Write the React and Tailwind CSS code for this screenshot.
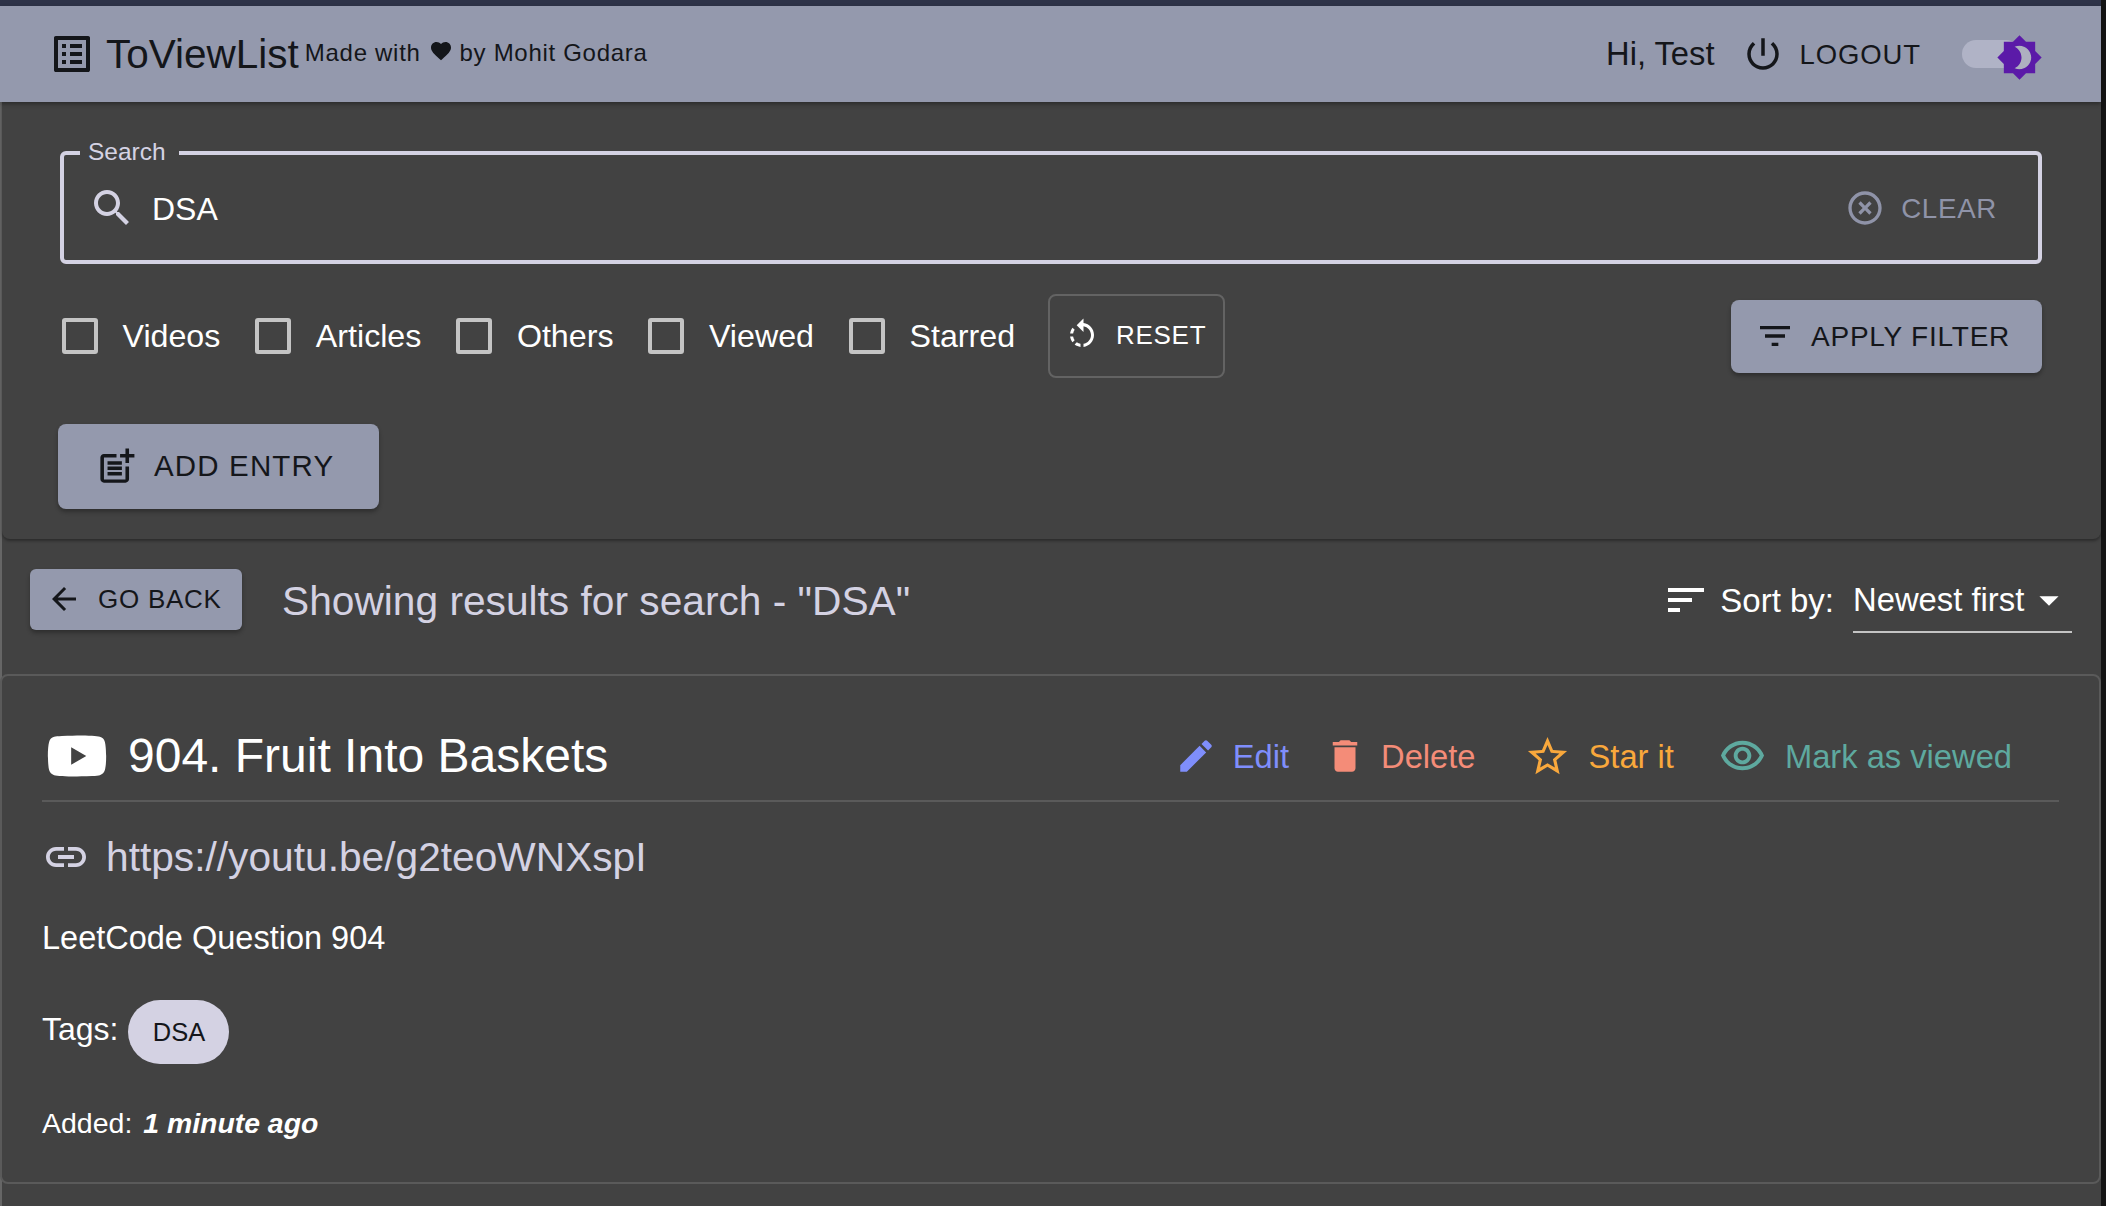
const paths = {
  list: 'M19 5v14H5V5h14m1.1-2H3.9c-.5 0-.9.4-.9.9v16.2c0 .4.4.9.9.9h16.2c.4 0 .9-.5.9-.9V3.9c0-.5-.5-.9-.9-.9zM11 7h6v2h-6V7zm0 4h6v2h-6v-2zm0 4h6v2h-6zM7 7h2v2H7zm0 4h2v2H7zm0 4h2v2H7z',
  heart: 'M12 21.35l-1.45-1.32C5.4 15.36 2 12.28 2 8.5 2 5.42 4.42 3 7.5 3c1.74 0 3.41.81 4.5 2.09C13.09 3.81 14.76 3 16.5 3 19.58 3 22 5.42 22 8.5c0 3.78-3.4 6.86-8.55 11.54L12 21.35z',
  power: 'M13 3h-2v10h2V3zm4.83 2.17l-1.42 1.42C17.99 7.86 19 9.81 19 12c0 3.87-3.13 7-7 7s-7-3.13-7-7c0-2.19 1.01-4.14 2.58-5.42L6.17 5.17C4.23 6.82 3 9.26 3 12c0 4.97 4.03 9 9 9s9-4.03 9-9c0-2.74-1.23-5.18-3.17-6.83z',
  sun: 'M20 8.69V4h-4.69L12 .69 8.69 4H4v4.69L.69 12 4 15.31V20h4.69L12 23.31 15.31 20H20v-4.69L23.31 12 20 8.69zM12 18c-.89 0-1.74-.2-2.5-.55C11.56 16.5 13 14.42 13 12s-1.44-4.5-3.5-5.45C10.26 6.2 11.11 6 12 6c3.31 0 6 2.69 6 6s-2.69 6-6 6z',
  moon: 'M12 18c-.89 0-1.74-.2-2.5-.55C11.56 16.5 13 14.42 13 12s-1.44-4.5-3.5-5.45C10.26 6.2 11.11 6 12 6c3.31 0 6 2.69 6 6s-2.69 6-6 6z',
  search: 'M15.5 14h-.79l-.28-.27C15.41 12.59 16 11.11 16 9.5 16 5.91 13.09 3 9.5 3S3 5.91 3 9.5 5.91 16 9.5 16c1.61 0 3.09-.59 4.23-1.57l.27.28v.79l5 4.99L20.49 19l-4.99-5zm-6 0C7.01 14 5 11.99 5 9.5S7.01 5 9.5 5 14 7.01 14 9.5 11.99 14 9.5 14z',
  clear: 'M14.59 8L12 10.59 9.41 8 8 9.41 10.59 12 8 14.59 9.41 16 12 13.41 14.59 16 16 14.59 13.41 12 16 9.41 14.59 8zM12 2C6.47 2 2 6.47 2 12s4.47 10 10 10 10-4.47 10-10S17.53 2 12 2zm0 18c-4.41 0-8-3.59-8-8s3.59-8 8-8 8 3.59 8 8-3.59 8-8 8z',
  reset: 'M7.11 8.53L5.7 7.11C4.8 8.27 4.24 9.61 4.07 11h2.02c.14-.87.49-1.72 1.02-2.47zM6.09 13H4.07c.17 1.39.72 2.73 1.62 3.89l1.41-1.42c-.52-.75-.87-1.59-1.01-2.47zm1.01 5.32c1.16.9 2.51 1.44 3.9 1.61V17.9c-.87-.15-1.71-.49-2.46-1.03L7.1 18.32zM13 4.07V1L8.45 5.55 13 10V6.09c2.84.48 5 2.94 5 5.91s-2.16 5.43-5 5.91v2.02c3.95-.49 7-3.85 7-7.93s-3.05-7.44-7-7.93z',
  filter: 'M10 18h4v-2h-4v2zM3 6v2h18V6H3zm3 7h12v-2H6v2z',
  sort: 'M3 18h6v-2H3v2zM3 6v2h18V6H3zm0 7h12v-2H3v2z',
  postAdd: 'M17 19.22H5V7h7V5H5c-1.1 0-2 .9-2 2v12c0 1.1.9 2 2 2h12c1.1 0 2-.9 2-2v-7h-2v7.22zM19 2h-2v3h-3c.01.01 0 2 0 2h3v2.99c.01.01 2 0 2 0V7h3V5h-3V2zM7 9h8v2H7V9zm0 3v2h8v-2H7zm0 3h8v2H7v-2z',
  back: 'M20 11H7.83l5.59-5.59L12 4l-8 8 8 8 1.41-1.41L7.83 13H20v-2z',
  caret: 'M7 10l5 5 5-5z',
  youtube: 'M10 15l5.19-3L10 9v6m11.56-7.83c.13.47.22 1.1.28 1.9.07.8.1 1.49.1 2.09L22 12c0 2.19-.16 3.8-.44 4.83-.25.9-.83 1.48-1.73 1.73-.47.13-1.33.22-2.65.28-1.3.07-2.49.1-3.59.1L12 19c-4.19 0-6.8-.16-7.83-.44-.9-.25-1.48-.83-1.73-1.73-.13-.47-.22-1.1-.28-1.9-.07-.8-.1-1.49-.1-2.09L2 12c0-2.19.16-3.8.44-4.83.25-.9.83-1.48 1.73-1.73.47-.13 1.33-.22 2.65-.28 1.3-.07 2.49-.1 3.59-.1L12 5c4.19 0 6.8.16 7.83.44.9.25 1.48.83 1.73 1.73z',
  link: 'M3.9 12c0-1.71 1.39-3.1 3.1-3.1h4V7H7c-2.76 0-5 2.24-5 5s2.24 5 5 5h4v-1.9H7c-1.71 0-3.1-1.39-3.1-3.1zM8 13h8v-2H8v2zm9-6h-4v1.9h4c1.71 0 3.1 1.39 3.1 3.1s-1.39 3.1-3.1 3.1h-4V17h4c2.76 0 5-2.24 5-5s-2.24-5-5-5z',
  edit: 'M3 17.25V21h3.75L17.81 9.94l-3.75-3.75L3 17.25zM20.71 7.04c.39-.39.39-1.02 0-1.41l-2.34-2.34c-.39-.39-1.02-.39-1.41 0l-1.83 1.83 3.75 3.75 1.83-1.83z',
  trash: 'M6 19c0 1.1.9 2 2 2h8c1.1 0 2-.9 2-2V7H6v12zM19 4h-3.5l-1-1h-5l-1 1H5v2h14V4z',
  star: 'M22 9.24l-7.19-.62L12 2 9.19 8.63 2 9.24l5.46 4.73L5.82 21 12 17.27 18.18 21l-1.63-7.03L22 9.24zM12 15.4l-3.76 2.27 1-4.28-3.32-2.88 4.38-.38L12 6.1l1.71 4.04 4.38.38-3.32 2.88 1 4.28L12 15.4z',
  eye: 'M12 6c3.79 0 7.17 2.13 8.82 5.5C19.17 14.87 15.79 17 12 17s-7.17-2.13-8.82-5.5C4.83 8.13 8.21 6 12 6m0-2C7 4 2.73 7.11 1 11.5 2.73 15.89 7 19 12 19s9.27-3.11 11-7.5C21.27 7.11 17 4 12 4zm0 5c1.38 0 2.5 1.12 2.5 2.5S13.38 14 12 14s-2.5-1.12-2.5-2.5S10.62 9 12 9m0-2c-2.48 0-4.5 2.02-4.5 4.5S9.52 16 12 16s4.5-2.02 4.5-4.5S14.48 7 12 7z',
};

function Icon({ name, className }) {
  return (
    <svg viewBox="0 0 24 24" fill="currentColor" className={`shrink-0 ${className}`}>
      <path d={paths[name]} />
    </svg>
  );
}

function FilterCheck({ label }) {
  return (
    <label className="flex items-center mr-[35px]">
      <span className="w-[36px] h-[36px] border-[4px] border-[#c4c4c4] rounded-[3px]" />
      <span className="ml-[24.5px] text-[32.2px] leading-[40px] text-white">{label}</span>
    </label>
  );
}

function Action({ icon, iconClass, label, color, gap, left }) {
  return (
    <button className={`flex items-center text-[32.7px] leading-[40px] ${color} ${left}`}>
      <Icon name={icon} className={iconClass} />
      <span className={`mt-[2px] ${gap}`}>{label}</span>
    </button>
  );
}

export default function App() {
  return (
    <div className="flex w-[2106px] h-[1206px] overflow-hidden bg-[#141414] [font-family:'Liberation_Sans',Arial,sans-serif]">
      <div className="w-[2101px] h-full flex flex-col bg-[#424242] border-l-2 border-[#666666]">
        <div className="h-[6px] -ml-[2px] bg-[#2e3348]" />

        <header className="relative z-20 h-[96px] -ml-[2px] flex items-center pl-[48px] pr-[81px] bg-[#9499ad] text-[#14161a] shadow-[0_2px_4px_rgba(0,0,0,0.35)]">
          <Icon name="list" className="w-[48px] h-[48px]" />
          <span className="ml-[10px] text-[40.5px] leading-[48px]">ToViewList</span>
          <span className="ml-[6px] mb-[3px] flex items-center text-[24px] leading-[32px] tracking-[0.7px]">
            Made with
            <Icon name="heart" className="w-[24px] h-[24px] ml-[8px] mr-[7px] -mt-[4px]" />
            by Mohit Godara
          </span>
          <span className="ml-auto text-[32.7px] leading-[40px]">Hi, Test</span>
          <Icon name="power" className="ml-[28px] w-[42px] h-[42px]" />
          <span className="ml-[15px] mt-[1px] text-[27.5px] leading-[36px] tracking-[0.9px]">LOGOUT</span>
          <div className="relative ml-[41px] w-[58px] h-[28px] rounded-full bg-[#b0b3c6]">
            <svg viewBox="0 0 24 24" className="absolute -right-[23px] -top-[6px] w-[47px] h-[47px]">
              <path d={paths.moon} fill="#aeb0c0" />
              <path d={paths.sun} fill="#5b1aa8" />
            </svg>
          </div>
        </header>

        <section className="relative z-10 h-[437px] pt-[49px] pl-[56px] pr-[59px] rounded-b-lg shadow-[0_2px_3px_rgba(0,0,0,0.35)]">
          <div className="relative ml-[2px] h-[113px] flex items-center pl-[24px] pr-[41px] pt-[2px] border-[4px] border-[#d4d2e3] rounded-[6px]">
            <span className="absolute left-[16px] -top-[17px] pl-[8px] pr-[13px] bg-[#424242] text-[24.5px] leading-[28px] text-[#d4d2e3]">Search</span>
            <Icon name="search" className="w-[48px] h-[48px] -mt-[2px] text-[#d4d2e3]" />
            <span className="ml-[16px] text-[32px] leading-[40px] text-white">DSA</span>
            <Icon name="clear" className="ml-auto w-[40px] h-[40px] -mt-[2px] text-[#8f93a8]" />
            <span className="ml-[16px] text-[27.7px] leading-[36px] tracking-[0.7px] text-[#8f93a8]">CLEAR</span>
          </div>

          <div className="mt-[30px] h-[84px] flex items-center pl-[4px]">
            <FilterCheck label="Videos" />
            <FilterCheck label="Articles" />
            <FilterCheck label="Others" />
            <FilterCheck label="Viewed" />
            <FilterCheck label="Starred" />
            <button className="-ml-[2px] w-[177px] h-[84px] flex items-center pl-[14px] pb-[3px] border-2 border-[#636363] rounded-[8px] text-white">
              <Icon name="reset" className="w-[36px] h-[36px]" />
              <span className="ml-[16px] text-[26px] leading-[32px] tracking-[0.7px]">RESET</span>
            </button>
            <button className="ml-auto w-[311px] h-[73px] flex items-center pl-[24px] rounded-[8px] bg-[#9499ad] text-[#14161a] shadow-[0_3px_4px_rgba(0,0,0,0.3)]">
              <Icon name="filter" className="w-[40px] h-[40px]" />
              <span className="ml-[16px] mt-[1px] text-[28px] leading-[36px] tracking-[0.77px]">APPLY FILTER</span>
            </button>
          </div>

          <button className="mt-[46px] w-[321px] h-[85px] flex items-center pl-[37px] rounded-[8px] bg-[#9499ad] text-[#14161a] shadow-[0_3px_4px_rgba(0,0,0,0.3)]">
            <Icon name="postAdd" className="w-[43px] h-[43px]" />
            <span className="ml-[16px] -mt-[2px] text-[29.5px] leading-[36px] tracking-[1.15px]">ADD ENTRY</span>
          </button>
        </section>

        <div className="h-[135px] pt-[30px] pl-[28px] pr-[29px] flex items-start">
          <button className="w-[212px] h-[61px] flex items-center pl-[16px] rounded-[6px] bg-[#9499ad] text-[#14161a] shadow-[0_3px_4px_rgba(0,0,0,0.3)]">
            <Icon name="back" className="w-[36px] h-[36px] -mt-[1px]" />
            <span className="ml-[16px] -mt-[2px] text-[26px] leading-[32px] tracking-[0.74px]">GO BACK</span>
          </button>
          <h2 className="ml-[40px] h-[66px] flex items-center text-[40.7px] text-[#d4d2e3]">Showing results for search - "DSA"</h2>
          <div className="ml-auto h-[64px] flex items-center text-white">
            <Icon name="sort" className="w-[48px] h-[48px] -mt-[2px]" />
            <span className="ml-[10px] text-[33px] leading-[40px]">Sort by:</span>
            <div className="ml-[19px] w-[219px] h-[64px] flex items-center justify-between border-b-2 border-[#c4c4c4]">
              <span className="text-[32.8px] leading-[40px]">Newest first</span>
              <Icon name="caret" className="w-[46px] h-[46px]" />
            </div>
          </div>
        </div>

        <article className="-ml-[2px] px-[40px] pt-[50px] pb-[41px] border-2 border-[#5a5a5a] rounded-lg">
          <div className="h-[76px] pb-[14px] flex items-center border-b-2 border-[#5a5a5a]">
            <Icon name="youtube" className="w-[70px] h-[70px] text-white" />
            <h3 className="ml-[16px] text-[48px] leading-[56px] text-white">904. Fruit Into Baskets</h3>
            <div className="ml-auto pr-[47px] flex items-center">
              <Action icon="edit" iconClass="w-[42px] h-[42px]" label="Edit" color="text-[#7f8efb]" gap="ml-[16px]" left="" />
              <Action icon="trash" iconClass="w-[42px] h-[42px]" label="Delete" color="text-[#f48c78]" gap="ml-[15px]" left="ml-[35px]" />
              <Action icon="star" iconClass="w-[47px] h-[47px]" label="Star it" color="text-[#f9a83c]" gap="ml-[18px]" left="ml-[48px]" />
              <Action icon="eye" iconClass="w-[47px] h-[47px]" label="Mark as viewed" color="text-[#5ea99f]" gap="ml-[19px]" left="ml-[45px]" />
            </div>
          </div>

          <div className="mt-[31px] h-[48px] flex items-center text-[#d4d2e3]">
            <Icon name="link" className="w-[48px] h-[48px]" />
            <span className="ml-[16px] text-[40.7px] leading-[48px]">https://youtu.be/g2teoWNXspI</span>
          </div>

          <p className="mt-[37px] text-[32.5px] leading-[40px] text-white">LeetCode Question 904</p>

          <div className="mt-[42px] flex items-center">
            <span className="-mt-[6px] text-[32px] leading-[40px] text-white">Tags:</span>
            <span className="ml-[10px] w-[101px] h-[64px] flex items-center justify-center rounded-full bg-[#d4d2e3] text-[25.5px] text-[#14161a]">DSA</span>
          </div>

          <p className="mt-[41px] text-[28.5px] leading-[36px] text-white">
            Added: <b className="ml-[3px] text-[28.4px] italic font-bold">1 minute ago</b>
          </p>
        </article>
      </div>
    </div>
  );
}
